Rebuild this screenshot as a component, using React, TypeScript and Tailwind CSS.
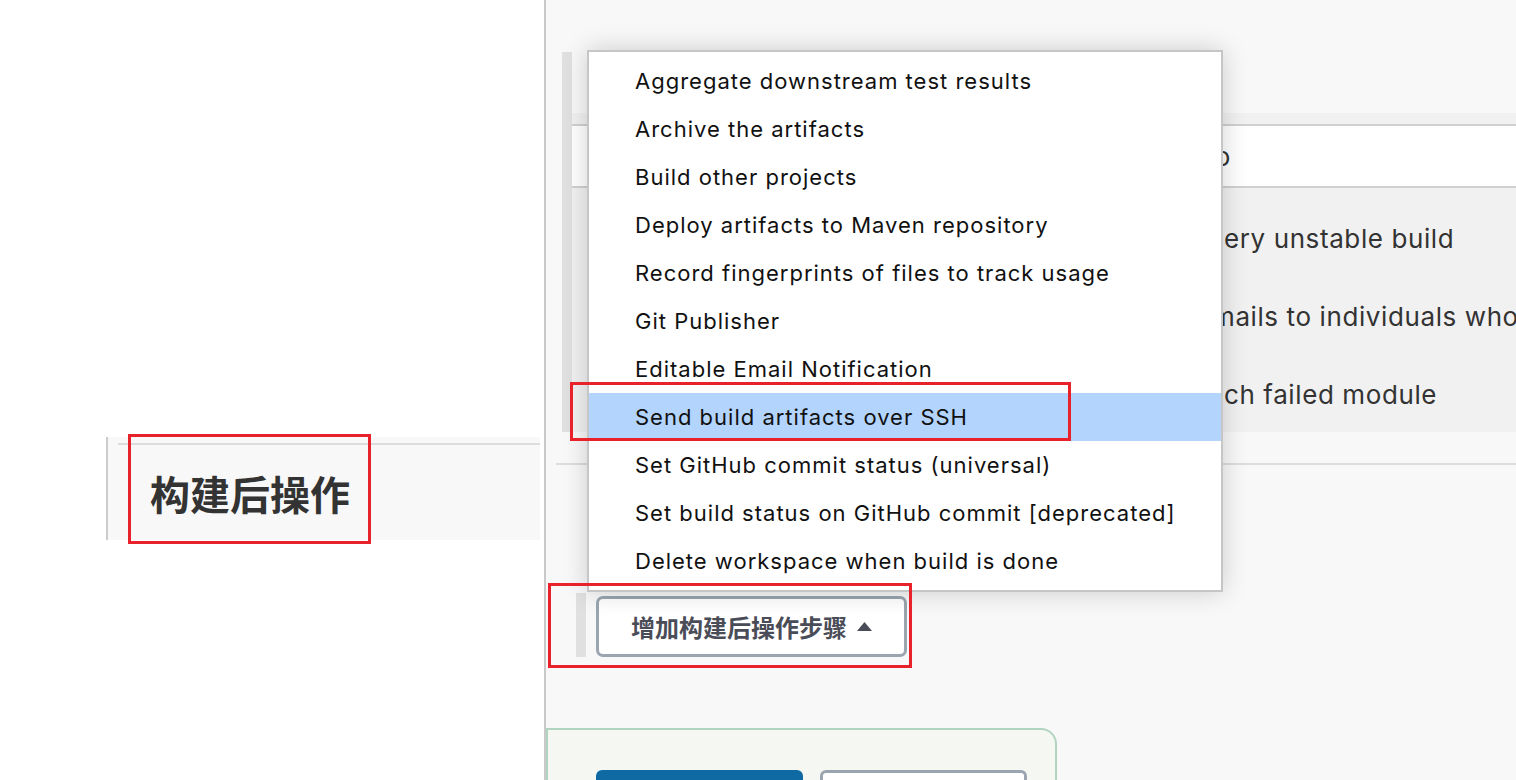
const menuItems = [
  'Aggregate downstream test results',
  'Archive the artifacts',
  'Build other projects',
  'Deploy artifacts to Maven repository',
  'Record fingerprints of files to track usage',
  'Git Publisher',
  'Editable Email Notification',
  'Send build artifacts over SSH',
  'Set GitHub commit status (universal)',
  'Set build status on GitHub commit [deprecated]',
  'Delete workspace when build is done',
];

const mailRows = [
  { hidden: 'Send e-mail for ev', shown: 'ery unstable build', w: 'w-[652px]' },
  { hidden: 'Send separate e-', shown: 'mails to individuals who', w: 'w-[640px]' },
  { hidden: 'Send e-mail for ea', shown: 'ch failed module', w: 'w-[652px]' },
];

function RedBox({ className }: { className: string }) {
  return <div className={`absolute border-[3px] border-[#e8212a] pointer-events-none ${className}`} />;
}

export default function App() {
  return (
    <div className="relative flex w-[1516px] h-[780px] overflow-hidden bg-white font-['Inter','Noto_Sans_CJK_SC',sans-serif] text-[#333]">
      {/* left column */}
      <div className="w-[544px] shrink-0 bg-white pt-[437px] pl-[106px] pr-[4px]">
        <div className="h-[103px] border-l-2 border-[#cccccc] bg-[#f8f8f8] pl-[10px] pt-[6px]">
          <div className="h-[2px] bg-[#dddddd]" />
          <div className="pl-[32px] pt-[24px] text-[40px] leading-[48px] font-bold font-['Noto_Sans_CJK_SC',sans-serif] text-[#333]">
            构建后操作
          </div>
        </div>
      </div>

      {/* right column */}
      <div className="relative flex-1 bg-[#f8f8f8] border-l-2 border-[#c9c9c9] pt-[52px]">
        {/* e-mail notification section (mostly under the menu) */}
        <div className="flex ml-[16px] h-[380px]">
          <div className="w-[10px] bg-[#e0e0e0]" />
          <div className="flex-1 flex flex-col pt-[61px]">
            <div className="flex-1 bg-[#f1f1f1] flex flex-col overflow-hidden">
              <div className="h-[11px] shrink-0" />
              <div className="h-[64px] shrink-0 bg-white border-y-2 border-[#d0d0d0] flex items-center">
                <div className="w-[659px] overflow-hidden whitespace-nowrap text-right text-[26px] tracking-[0.6px]">Default Recipients to</div>
              </div>
              <div className="pt-[11px]">
                {mailRows.map((r) => (
                  <div key={r.shown} className="h-[78px] flex items-center whitespace-nowrap text-[26px] tracking-[0.6px] text-[#333]">
                    <div className={`${r.w} shrink-0 overflow-hidden text-right`}>{r.hidden}</div>
                    <div>{r.shown}</div>
                  </div>
                ))}
              </div>
            </div>
          </div>
        </div>

        <div className="mt-[31px] ml-[10px] h-[2px] bg-[#dddddd]" />

        {/* add post-build step */}
        <div className="mt-[128px] ml-[30px] flex items-end">
          <div className="w-[10px] h-[64px] bg-[#e0e0e0]" />
          <button className="ml-[10px] w-[311px] h-[61px] rounded-[7px] border-[3px] border-[#9aa5b0] bg-white flex items-center pl-[32px] gap-[10px] text-[24px] font-bold text-[#4a4d57] font-['Noto_Sans_CJK_SC',sans-serif]">
            增加构建后操作步骤
            <svg width="15" height="9" viewBox="0 0 15 9">
              <polygon points="7.5,0 15,9 0,9" fill="#4a4d57" />
            </svg>
          </button>
        </div>

        {/* bottom bar */}
        <div className="mt-[71px] w-[511px] h-[60px] border-2 border-[#b0d4c0] rounded-tr-[16px] bg-[#f5f8f2] pt-[40px] pl-[48px] flex gap-[17px]">
          <div className="w-[207px] h-[30px] rounded-t-[6px] bg-[#0f6aa3]" />
          <div className="w-[207px] h-[30px] rounded-t-[6px] border-[3px] border-b-0 border-[#9aa5b0] bg-white" />
        </div>

        {/* dropdown menu */}
        <div className="absolute left-[41px] top-[50px] w-[636px] h-[542px] bg-white border-2 border-[#c6c6c6] shadow-[0_0_24px_rgba(0,0,0,0.18)] py-[5px]">
          {menuItems.map((item) => (
            <div
              key={item}
              className={`h-[48px] flex items-center pl-[46px] text-[22px] tracking-[1px] text-[#111] whitespace-nowrap ${
                item === 'Send build artifacts over SSH' ? 'bg-[#b3d4fc]' : ''
              }`}
            >
              {item}
            </div>
          ))}
        </div>
      </div>

      {/* annotation boxes */}
      <RedBox className="left-[128px] top-[434px] w-[243px] h-[110px]" />
      <RedBox className="left-[570px] top-[382px] w-[501px] h-[59px]" />
      <RedBox className="left-[548px] top-[583px] w-[364px] h-[85px]" />
    </div>
  );
}
